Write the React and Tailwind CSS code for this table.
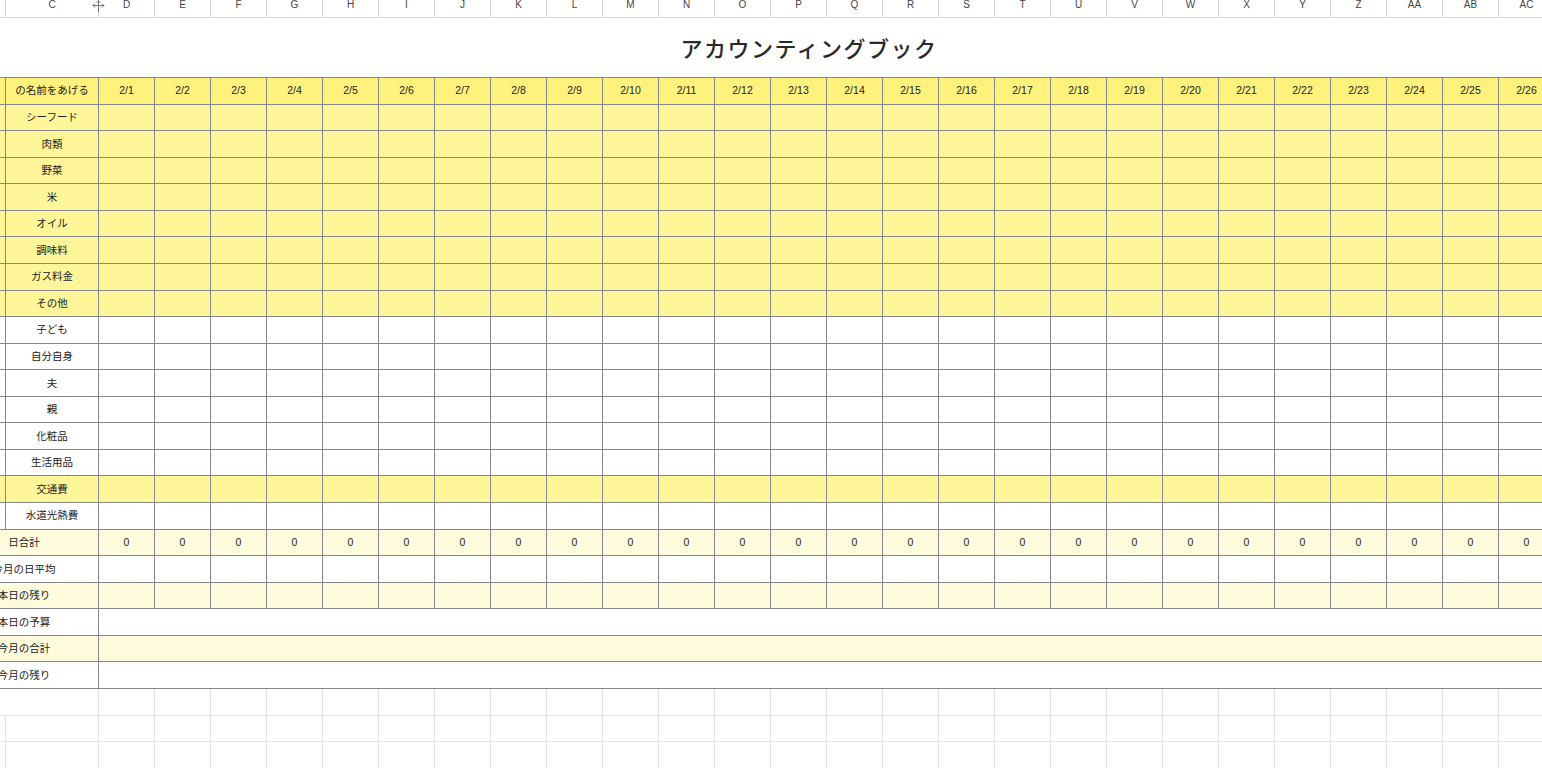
import React from "react";

const LETTERS = ["D","E","F","G","H","I","J","K","L","M","N","O","P","Q","R","S","T","U","V","W","X","Y","Z","AA","AB","AC"];
const DATES = LETTERS.map((_, i) => `2/${i + 1}`);

const Y = "bg-[#fff69a]";
const W = "bg-white";
const L = "bg-[#fefbdc]";

const upperRows = [
  { label: "シーフード", bg: Y },
  { label: "肉類", bg: Y },
  { label: "野菜", bg: Y },
  { label: "米", bg: Y },
  { label: "オイル", bg: Y },
  { label: "調味料", bg: Y },
  { label: "ガス料金", bg: Y },
  { label: "その他", bg: Y },
  { label: "子ども", bg: W },
  { label: "自分自身", bg: W },
  { label: "夫", bg: W },
  { label: "親", bg: W },
  { label: "化粧品", bg: W },
  { label: "生活用品", bg: W },
  { label: "交通費", bg: Y },
  { label: "水道光熱費", bg: W },
];

const FONT = { fontFamily: '"Liberation Sans","Noto Sans CJK JP",sans-serif' };

function Row({ bg, label, cells }) {
  return (
    <div className={`flex h-[26.57px] shrink-0 border-b border-[#85878f] ${bg}`}>
      <div className="w-[6px] shrink-0 border-r border-[#85878f]" />
      <div className="w-[93px] shrink-0 border-r border-[#85878f] flex items-center justify-center pt-[1px] whitespace-nowrap text-[10.5px] text-[#222]">
        {label}
      </div>
      {LETTERS.map((l, i) => (
        <div
          key={l}
          className="w-[56px] shrink-0 border-r border-[#85878f] flex items-center justify-center pt-[1px] text-[10.5px] text-[#222]"
        >
          {cells ? cells[i] : null}
        </div>
      ))}
    </div>
  );
}

function MergedLabelRow({ bg, label, cells, merged }) {
  return (
    <div className={`flex h-[26.57px] shrink-0 border-b border-[#85878f] ${bg}`}>
      <div className="w-[99px] shrink-0 border-r border-[#85878f] flex items-center justify-center pt-[1px] pr-[50px] whitespace-nowrap text-[10.5px] text-[#222]">
        {label}
      </div>
      {merged ? (
        <div className="flex-1" />
      ) : (
        LETTERS.map((l, i) => (
          <div
            key={l}
            className="w-[56px] shrink-0 border-r border-[#85878f] flex items-center justify-center pt-[1px] text-[10.5px] text-[#222]"
          >
            {cells ? cells[i] : null}
          </div>
        ))
      )}
    </div>
  );
}

function GridRow({ first }) {
  return (
    <div className="flex h-[26.57px] shrink-0 border-b border-[#e3e3e3]">
      <div className={`w-[6px] shrink-0 ${first ? "" : "border-r border-[#e3e3e3]"}`} />
      <div className="w-[93px] shrink-0 border-r border-[#e3e3e3]" />
      {LETTERS.map((l) => (
        <div key={l} className="w-[56px] shrink-0 border-r border-[#e3e3e3]" />
      ))}
    </div>
  );
}

export default function App() {
  const zeros = LETTERS.map(() => "0");
  return (
    <div className="w-[1542px] h-[768px] overflow-hidden bg-white relative" style={FONT}>
      <div className="w-[1600px] flex flex-col">
        {/* column header */}
        <div className="flex h-[18px] shrink-0 border-b border-[#d6d6d6]">
          <div className="w-[6px] shrink-0 border-r border-[#d6d6d6]" />
          <div className="w-[93px] shrink-0 border-r border-[#d6d6d6] flex justify-center text-[10px] leading-[10px] text-[#444]">
            C
          </div>
          {LETTERS.map((l) => (
            <div
              key={l}
              className="w-[56px] shrink-0 border-r border-[#d6d6d6] flex justify-center text-[10px] leading-[10px] text-[#444]"
            >
              {l}
            </div>
          ))}
        </div>

        {/* title */}
        <div className="h-[59px] shrink-0 flex items-center justify-center pl-[76px] w-[1542px]">
          <span className="text-[22px] font-medium tracking-[1.5px] text-[#2a2a2a]" style={{ fontFamily: '"Noto Sans CJK JP",sans-serif' }}>
            アカウンティングブック
          </span>
        </div>

        {/* table */}
        <div className="flex flex-col border-t border-[#85878f]">
          <div className="flex h-[26.57px] shrink-0 border-b border-[#85878f] bg-[#fff27c]">
            <div className="w-[6px] shrink-0 border-r border-[#85878f]" />
            <div className="w-[93px] shrink-0 border-r border-[#85878f] flex items-center justify-center pt-[1px] whitespace-nowrap text-[10.5px] text-[#222]">
              の名前をあげる
            </div>
            {DATES.map((d) => (
              <div
                key={d}
                className="w-[56px] shrink-0 border-r border-[#85878f] flex items-center justify-center pt-[1px] text-[10.5px] text-[#222]"
              >
                {d}
              </div>
            ))}
          </div>
          {upperRows.map((r) => (
            <Row key={r.label} bg={r.bg} label={r.label} />
          ))}
          <MergedLabelRow bg={L} label="日合計" cells={zeros} />
          <MergedLabelRow bg={W} label="今月の日平均" />
          <MergedLabelRow bg={L} label="本日の残り" />
          <MergedLabelRow bg={W} label="本日の予算" merged />
          <MergedLabelRow bg={L} label="今月の合計" merged />
          <MergedLabelRow bg={W} label="今月の残り" merged />
        </div>

        <GridRow first />
        <GridRow />
        <GridRow />
      </div>

      {/* column resize cursor */}
      <svg className="absolute left-[92px] top-0" width="13" height="12" viewBox="0 0 13 12">
        <line x1="6.5" y1="0" x2="6.5" y2="12" stroke="#777" strokeWidth="1" />
        <line x1="1" y1="5.5" x2="12" y2="5.5" stroke="#777" strokeWidth="1" />
        <path d="M3 3.5 L1 5.5 L3 7.5" fill="none" stroke="#777" strokeWidth="1" />
        <path d="M10 3.5 L12 5.5 L10 7.5" fill="none" stroke="#777" strokeWidth="1" />
        <line x1="4.5" y1="2" x2="8.5" y2="2" stroke="#777" strokeWidth="1" />
      </svg>
    </div>
  );
}
